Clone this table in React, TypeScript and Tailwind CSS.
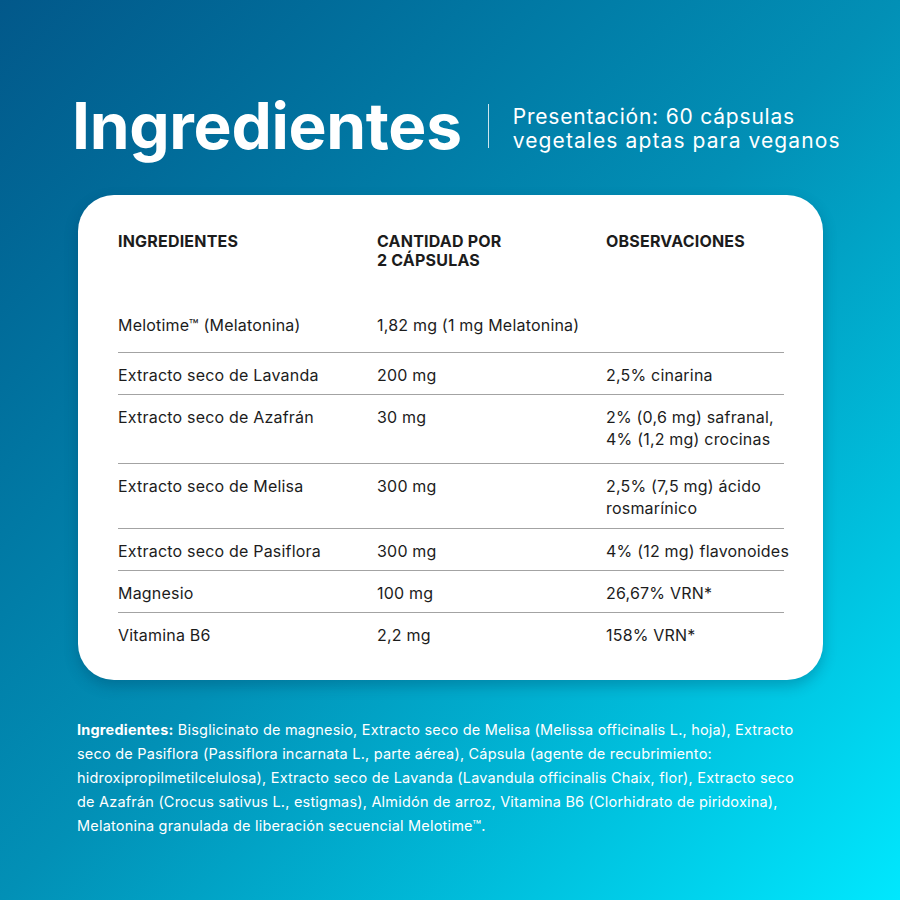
const rows = [
  { name: "Extracto seco de Lavanda", qty: "200 mg", obs: ["2,5% cinarina"], h: "h-[42px]" },
  { name: "Extracto seco de Azafrán", qty: "30 mg", obs: ["2% (0,6 mg) safranal,", "4% (1,2 mg) crocinas"], h: "h-[69px]" },
  { name: "Extracto seco de Melisa", qty: "300 mg", obs: ["2,5% (7,5 mg) ácido", "rosmarínico"], h: "h-[65px]" },
  { name: "Extracto seco de Pasiflora", qty: "300 mg", obs: ["4% (12 mg) flavonoides"], h: "h-[42px]" },
  { name: "Magnesio", qty: "100 mg", obs: ["26,67% VRN*"], h: "h-[42px]" },
];

export default function App() {
  return (
    <div className="w-[900px] h-[900px] bg-gradient-to-br from-[#02588a] via-[#0290b6] to-[#00e8fe] font-['Inter',sans-serif] text-white overflow-hidden">
      {/* Title */}
      <div className="flex items-center pt-[88px] pl-[72px]">
        <h1 className="text-[64px] font-bold leading-[76px] tracking-[-0.3px]">Ingredientes</h1>
        <div className="ml-[26px] w-px h-[44px] bg-white/80" />
        <p className="ml-[24px] mt-[6px] text-[21px] leading-[24px] font-normal tracking-[0.8px] whitespace-nowrap">
          Presentación: 60 cápsulas
          <br />
          <span className="tracking-[1.1px]">vegetales aptas para veganos</span>
        </p>
      </div>

      {/* Table card */}
      <div className="mt-[31px] ml-[78px] w-[745px] h-[485px] rounded-[36px] bg-white shadow-[0_6px_14px_rgba(0,40,70,0.25)] pl-[40px] pr-[39px] pt-[37px] text-[#1c1c1c]">
        <div className="grid grid-cols-[259px_229px_1fr] text-[16px] font-bold leading-[19px] tracking-[0.2px]">
          <div>INGREDIENTES</div>
          <div>
            CANTIDAD POR
            <br />2 CÁPSULAS
          </div>
          <div>OBSERVACIONES</div>
        </div>
        <div className="text-[16px] leading-[22px] tracking-[0.2px] whitespace-nowrap">
          <div className="grid grid-cols-[259px_229px_1fr] h-[83px] items-end pb-[16px] border-b border-[#a3a3a3]">
            <div>Melotime™ (Melatonina)</div>
            <div>1,82 mg (1 mg Melatonina)</div>
            <div />
          </div>
          {rows.map((r) => (
            <div
              key={r.name}
              className={`grid grid-cols-[259px_229px_1fr] ${r.h} pt-[11px] border-b border-[#a3a3a3]`}
            >
              <div>{r.name}</div>
              <div>{r.qty}</div>
              <div>
                {r.obs.map((o) => (
                  <div key={o}>{o}</div>
                ))}
              </div>
            </div>
          ))}
          <div className="grid grid-cols-[259px_229px_1fr] pt-[11px]">
            <div>Vitamina B6</div>
            <div>2,2 mg</div>
            <div>158% VRN*</div>
          </div>
        </div>
      </div>

      {/* Ingredients paragraph */}
      <p className="mt-[38px] ml-[77px] text-[14.5px] leading-[24px] tracking-[0.2px] whitespace-nowrap">
        <span className="font-bold">Ingredientes:</span> Bisglicinato de magnesio, Extracto seco de Melisa (Melissa officinalis L., hoja), Extracto
        <br />
        seco de Pasiflora (Passiflora incarnata L., parte aérea), Cápsula (agente de recubrimiento:
        <br />
        hidroxipropilmetilcelulosa), Extracto seco de Lavanda (Lavandula officinalis Chaix, flor), Extracto seco
        <br />
        de Azafrán (Crocus sativus L., estigmas), Almidón de arroz, Vitamina B6 (Clorhidrato de piridoxina),
        <br />
        Melatonina granulada de liberación secuencial Melotime™.
      </p>
    </div>
  );
}
